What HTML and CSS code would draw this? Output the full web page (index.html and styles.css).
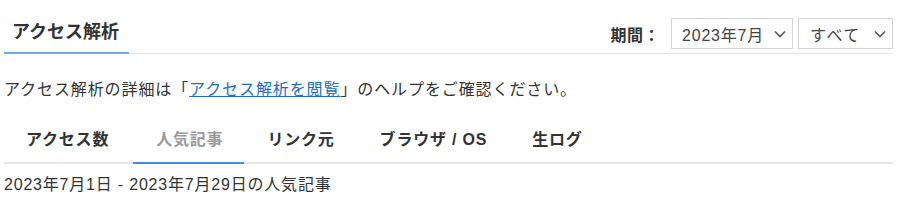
FILE: index.html
```html
<!DOCTYPE html>
<html lang="ja">
<head>
    <meta charset="UTF-8">
    <title>アクセス解析</title>
    <link rel="stylesheet" href="styles.css">
</head>
<body>
    <div class="container">
        <header class="pageHeader">
            <h1 class="pageTitle">アクセス解析</h1>
            <div class="period">
                <span class="periodLabel">期間：</span>
                <div class="select selectMonth">
                    <span>2023年7月</span>
                    <svg class="chevron" width="12" height="8" viewBox="0 0 12 8"><path d="M1 1.5 L6 6.5 L11 1.5" fill="none" stroke="#555" stroke-width="1.6"/></svg>
                </div>
                <div class="select selectAll">
                    <span>すべて</span>
                    <svg class="chevron" width="12" height="8" viewBox="0 0 12 8"><path d="M1 1.5 L6 6.5 L11 1.5" fill="none" stroke="#555" stroke-width="1.6"/></svg>
                </div>
            </div>
        </header>

        <p class="intro">アクセス解析の詳細は「<a href="#">アクセス解析を閲覧</a>」のヘルプをご確認ください。</p>

        <nav class="tabs">
            <a class="tab" href="#">アクセス数</a>
            <a class="tab active" href="#">人気記事</a>
            <a class="tab" href="#">リンク元</a>
            <a class="tab" href="#">ブラウザ / OS</a>
            <a class="tab" href="#">生ログ</a>
        </nav>

        <p class="range">2023年7月1日 - 2023年7月29日の人気記事</p>
    </div>
</body>
</html>
```

FILE: styles.css
```css
body {
    margin: 0;
    padding: 0;
    background: #fff;
    color: #333;
    font-family: 'Liberation Sans', 'Noto Sans CJK JP', sans-serif;
}
.container {
    width: 889px;
    margin-left: 4px;
}
.pageHeader {
    display: flex;
    justify-content: space-between;
    align-items: flex-end;
    border-bottom: 1px solid #e6e6e6;
    height: 53px;
}
.pageTitle {
    margin: 0 0 -1px 0;
    padding: 0 10px 8px 8px;
    font-size: 18px;
    font-weight: bold;
    line-height: 24px;
    white-space: nowrap;
    color: #333;
    border-bottom: 2px solid #6cb0da;
}
.period {
    display: flex;
    align-items: center;
    margin-bottom: 4px;
}
.periodLabel {
    font-size: 16px;
    font-weight: bold;
    letter-spacing: 0.5px;
    margin-right: 11px;
}
.select {
    display: flex;
    align-items: center;
    justify-content: space-between;
    height: 29px;
    border: 1px solid #d4d4d4;
    padding: 0 6px 0 10px;
    font-size: 16px;
    letter-spacing: 0.8px;
    color: #444;
    box-sizing: content-box;
}
.selectMonth {
    width: 104px;
    margin-right: 5px;
}
.selectAll {
    width: 76px;
    padding-left: 11px;
    letter-spacing: 1.5px;
}
.chevron {
    display: block;
}
.intro {
    margin: 25px 0 0 0;
    font-size: 16px;
    line-height: 22px;
    letter-spacing: 0.9px;
}
.intro a {
    color: #1a6fc9;
    text-decoration: underline;
}
.tabs {
    display: flex;
    margin-top: 23px;
    border-bottom: 2px solid #e6e6e6;
}
.tab {
    padding: 5px 22px 11px 23px;
    margin-bottom: -2px;
    font-size: 16px;
    font-weight: bold;
    line-height: 22px;
    letter-spacing: 0.8px;
    white-space: nowrap;
    color: #333;
    text-decoration: none;
    border-bottom: 2px solid transparent;
}
.tab:first-child {
    padding-left: 22px;
    padding-right: 24px;
}
.tab.active {
    padding-right: 21px;
    color: #999;
    border-bottom-color: #3d8fe0;
}
.range {
    margin: 11px 0 0 0;
    font-size: 16px;
    line-height: 20px;
    letter-spacing: 0.8px;
}
```
